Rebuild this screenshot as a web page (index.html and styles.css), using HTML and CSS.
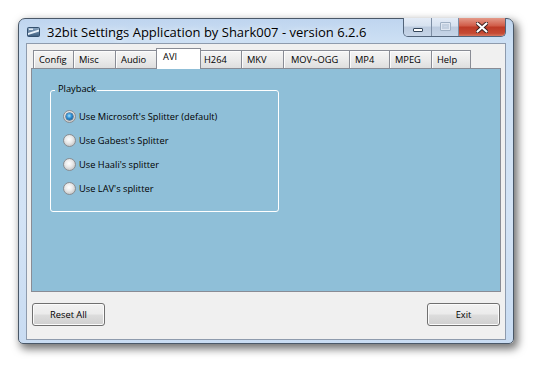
FILE: index.html
```html
<!DOCTYPE html>
<html>
<head>
<meta charset="utf-8">
<title>32bit Settings Application</title>
<link rel="stylesheet" href="styles.css">
</head>
<body>
<div class="window">
  <div class="titlebar">
    <svg class="appicon" width="13" height="10" viewBox="0 0 13 10">
      <defs>
        <linearGradient id="ig" x1="0" y1="0" x2="0" y2="1">
          <stop offset="0" stop-color="#8aa6c2"/>
          <stop offset="1" stop-color="#3d5d7e"/>
        </linearGradient>
      </defs>
      <rect x="0.5" y="0.5" width="12" height="9" rx="1" fill="url(#ig)" stroke="#34506e"/>
      <path d="M1 6 L12 2.5 L12 4.5 L1 8 Z" fill="#e8f1fa"/>
      <rect x="2" y="1.5" width="4" height="1.5" fill="#dfe9f3"/>
    </svg>
    <span class="title">32bit Settings Application by Shark007 - version 6.2.6</span>
    <div class="caption">
      <div class="cbtn cmin"><span class="minbar"></span></div>
      <div class="cbtn cmax"><span class="maxbox"></span></div>
      <div class="cbtn cclose">
        <svg width="12" height="11" viewBox="0 0 12 11">
          <path d="M1.5 1.5 L10.5 9.5 M10.5 1.5 L1.5 9.5" stroke="#3a2020" stroke-width="4" stroke-linecap="round"/>
          <path d="M1.5 1.5 L10.5 9.5 M10.5 1.5 L1.5 9.5" stroke="#ffffff" stroke-width="2.2" stroke-linecap="round"/>
        </svg>
      </div>
    </div>
  </div>
  <div class="client">
    <div class="tabs">
      <div class="tab t-config">Config</div>
      <div class="tab t-misc">Misc</div>
      <div class="tab t-audio">Audio</div>
      <div class="tab tab-active t-avi">AVI</div>
      <div class="tab t-h264">H264</div>
      <div class="tab t-mkv">MKV</div>
      <div class="tab t-movogg">MOV~OGG</div>
      <div class="tab t-mp4">MP4</div>
      <div class="tab t-mpeg">MPEG</div>
      <div class="tab t-help">Help</div>
    </div>
    <div class="panel">
      <div class="group">
        <span class="legend">Playback</span>
        <div class="option"><span class="radio radio-on"></span>Use Microsoft's Splitter (default)</div>
        <div class="option"><span class="radio"></span>Use Gabest's Splitter</div>
        <div class="option"><span class="radio"></span>Use Haali's splitter</div>
        <div class="option"><span class="radio"></span>Use LAV's splitter</div>
      </div>
    </div>
    <div class="buttons">
      <div class="btn">Reset All</div>
      <div class="btn">Exit</div>
    </div>
  </div>
</div>
</body>
</html>
```

FILE: styles.css
```css
* { box-sizing: border-box; }
html, body { margin: 0; padding: 0; }
body {
  background: #ffffff;
  width: 534px;
  height: 366px;
  padding: 18px 0 0 18px;
  overflow: hidden;
  font-family: "Open Sans", "Liberation Sans", sans-serif;
  font-size: 9.3px;
  color: #000;
}

.window {
  width: 496px;
  height: 326px;
  display: flex;
  flex-direction: column;
  border: 1px solid #4a5868;
  border-radius: 7px 7px 5px 5px;
  background: linear-gradient(to bottom, #bfd5ef 0px, #cde0f4 24px, #d3e3f5 60%, #c9dcf2 100%);
  box-shadow: 3px 4px 9px 1px rgba(0, 0, 0, 0.55);
}

/* title bar */
.titlebar {
  height: 24px;
  display: flex;
  align-items: flex-start;
  padding-left: 8px;
  flex: none;
}
.appicon { margin-top: 8px; flex: none; }
.title {
  margin-left: 7px;
  margin-top: 5px;
  font-size: 13px;
  line-height: 16px;
  white-space: nowrap;
  color: #000;
  text-shadow: 0 0 6px rgba(255,255,255,0.9);
}
.caption {
  margin-left: auto;
  margin-right: 7px;
  margin-top: -1px;
  height: 19px;
  display: flex;
  border: 1px solid #52647a;
  border-top: none;
  border-radius: 0 0 5px 5px;
  overflow: hidden;
  flex: none;
}
.cbtn {
  height: 18px;
  display: flex;
  align-items: center;
  justify-content: center;
}
.cmin, .cmax {
  width: 27px;
  background: linear-gradient(to bottom, #e4ecf7 0%, #d6e1ef 45%, #bccbdf 50%, #c6d5e8 100%);
  border-right: 1px solid #7d8ea4;
}
.cmin { width: 28px; }
.cclose {
  width: 46px;
  background: linear-gradient(to bottom, #e49a8a 0%, #d05a46 45%, #bd3a26 50%, #c54a34 85%, #d6765f 100%);
}
.minbar {
  width: 10px;
  height: 4px;
  margin-top: 5px;
  background: #fff;
  border: 1px solid #35475c;
  border-radius: 1px;
}
.maxbox {
  width: 11px;
  height: 9px;
  border: 1px solid #9fb0c4;
  border-radius: 1px;
  box-shadow: inset 0 0 0 1px #dfe7f2, inset 0 0 0 3px #c3d0e0;
  margin-top: -1px;
}

/* client */
.client {
  margin: 0 7px;
  height: 297px;
  flex: none;
  border: 1px solid #8e9bad;
  background: #f0f0f0;
  padding: 4px 4px 0 4px;
  display: flex;
  flex-direction: column;
}

.tabs {
  height: 21px;
  margin-bottom: -1px;
  margin-left: 2px;
  display: flex;
  align-items: flex-end;
  position: relative;
  z-index: 1;
  flex: none;
}
.tab {
  height: 18px;
  margin-bottom: 1px;
  margin-left: -1px;
  border: 1px solid #898c95;
  border-bottom: none;
  background: linear-gradient(to bottom, #f5f5f5 0%, #ebebeb 50%, #dedede 100%);
  box-shadow: inset 1px 1px 0 #fcfcfc;
  padding: 1px 0 0 5px;
  line-height: 15px;
  white-space: nowrap;
}
.tabs .tab:first-child { margin-left: 0; }
.t-config { width: 41px; }
.t-misc { width: 43px; }
.t-audio { width: 44px; }
.t-h264 { width: 44px; }
.t-mkv { width: 43px; }
.t-movogg { width: 67px; padding-left: 7px; }
.t-mp4 { width: 41px; }
.t-mpeg { width: 43px; }
.t-help { width: 40px; }
.tab-active {
  width: 45px;
  height: 21px;
  margin: 0 -2px 0 -3px;
  padding: 0 0 0 6px;
  background: #ffffff;
  box-shadow: none;
  position: relative;
  z-index: 2;
}

.panel {
  height: 224px;
  flex: none;
  border: 1px solid #898c95;
  background: #8fbfd8;
  padding: 21px 0 0 18px;
}

.group {
  position: relative;
  width: 229px;
  height: 122px;
  border: 1px solid #ffffff;
  border-radius: 3px;
  padding-top: 13px;
}
.legend {
  position: absolute;
  top: -8px;
  left: 4px;
  padding: 0 1px 0 3px;
  line-height: 12px;
  background: #8fbfd8;
}
.option {
  height: 24px;
  display: flex;
  align-items: center;
  padding-left: 12px;
  white-space: nowrap;
}
.radio {
  width: 13px;
  height: 13px;
  margin-right: 3px;
  border-radius: 50%;
  border: 1px solid #8a8d91;
  background: radial-gradient(circle at 45% 40%, #ffffff 0%, #eaeaea 40%, #c9c9c9 75%, #e8e8e8 100%);
  display: flex;
  align-items: center;
  justify-content: center;
  flex: none;
}
.radio-on::after {
  content: "";
  width: 7px;
  height: 7px;
  border-radius: 50%;
  background: radial-gradient(circle at 45% 40%, #a8e4ff 0%, #2a8ad0 45%, #0b4f86 90%);
  box-shadow: 0 0 0 0.5px #0c3f6a;
}

.buttons {
  margin-top: 11px;
  padding: 0 1px;
  display: flex;
  justify-content: space-between;
  flex: none;
}
.btn {
  width: 73px;
  height: 23px;
  border: 1px solid #707070;
  border-radius: 3px;
  background: linear-gradient(to bottom, #f2f2f2 0%, #ebebeb 48%, #dddddd 52%, #cfcfcf 100%);
  box-shadow: inset 0 0 0 1px #fbfbfb;
  display: flex;
  align-items: center;
  justify-content: center;
  line-height: 12px;
}
```
